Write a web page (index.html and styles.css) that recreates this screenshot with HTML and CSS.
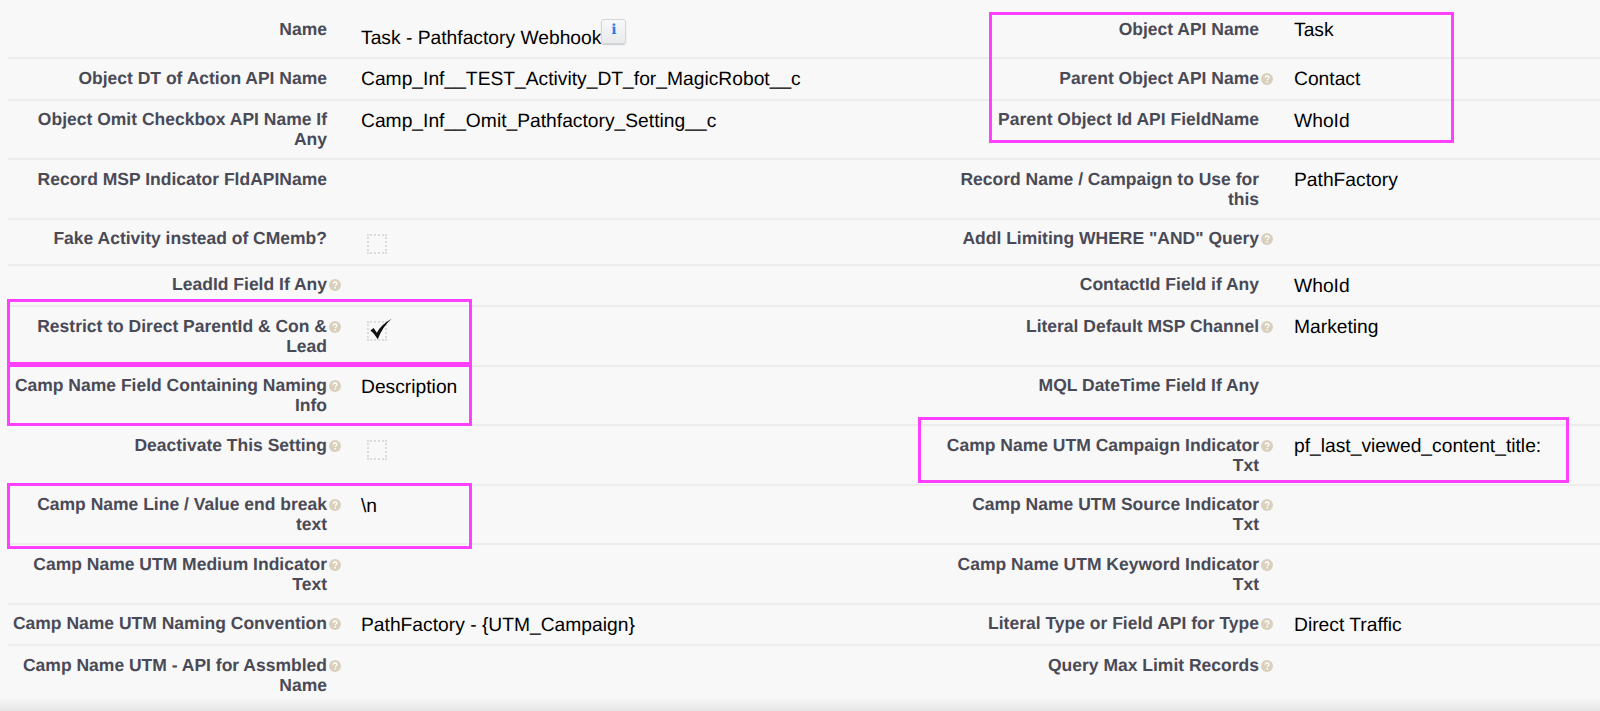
FILE: index.html
```html
<!DOCTYPE html>
<html lang="en">
<head>
<meta charset="utf-8">
<title>Task - Pathfactory Webhook</title>
<link rel="stylesheet" href="styles.css">
</head>
<body>
<svg class="defs" width="0" height="0" aria-hidden="true">
  <symbol id="help" viewBox="0 0 12 12">
    <circle cx="6" cy="6" r="6" fill="#d9d0bd"/>
    <path d="M4.2 4.7C4.3 3.6 5 3 6 3s1.9.6 1.9 1.6c0 .8-.5 1.1-1 1.5-.4.3-.6.5-.6 1" fill="none" stroke="#fff" stroke-width="1.3"/>
    <rect x="5.5" y="8" width="1.5" height="1.5" fill="#fff"/>
  </symbol>
</svg>
<main class="detail">
  <div class="row row-first">
    <div class="label">Name</div>
    <div class="value">Task - Pathfactory Webhook<span class="info">i</span></div>
    <div class="label">Object API Name</div>
    <div class="value">Task</div>
  </div>
  <div class="row">
    <div class="label">Object DT of Action API Name</div>
    <div class="value">Camp_Inf__TEST_Activity_DT_for_MagicRobot__c</div>
    <div class="label">Parent Object API Name<svg class="help"><use href="#help"/></svg></div>
    <div class="value">Contact</div>
  </div>
  <div class="row">
    <div class="label">Object Omit Checkbox API Name If<br>Any</div>
    <div class="value">Camp_Inf__Omit_Pathfactory_Setting__c</div>
    <div class="label">Parent Object Id API FieldName</div>
    <div class="value">WhoId</div>
  </div>
  <div class="row">
    <div class="label">Record MSP Indicator FldAPIName</div>
    <div class="value"></div>
    <div class="label">Record Name / Campaign to Use for<br>this</div>
    <div class="value">PathFactory</div>
  </div>
  <div class="row">
    <div class="label">Fake Activity instead of CMemb?</div>
    <div class="value"><span class="check"></span></div>
    <div class="label">Addl Limiting WHERE "AND" Query<svg class="help"><use href="#help"/></svg></div>
    <div class="value"></div>
  </div>
  <div class="row">
    <div class="label">LeadId Field If Any<svg class="help"><use href="#help"/></svg></div>
    <div class="value"></div>
    <div class="label">ContactId Field if Any</div>
    <div class="value">WhoId</div>
  </div>
  <div class="row">
    <div class="label">Restrict to Direct ParentId &amp; Con &amp;<svg class="help"><use href="#help"/></svg><br>Lead</div>
    <div class="value"><span class="check">
      <svg class="tick" viewBox="0 0 26 24"><path d="M1.5 13.5 5 11l3.5 5C12 10 17 5 24.5 1 18 7 13 14 9.5 23 7 19 4.5 16 1.5 13.5Z" fill="#111"/></svg>
    </span></div>
    <div class="label">Literal Default MSP Channel<svg class="help"><use href="#help"/></svg></div>
    <div class="value">Marketing</div>
  </div>
  <div class="row">
    <div class="label">Camp Name Field Containing Naming<svg class="help"><use href="#help"/></svg><br>Info</div>
    <div class="value">Description</div>
    <div class="label">MQL DateTime Field If Any</div>
    <div class="value"></div>
  </div>
  <div class="row">
    <div class="label">Deactivate This Setting<svg class="help"><use href="#help"/></svg></div>
    <div class="value"><span class="check"></span></div>
    <div class="label">Camp Name UTM Campaign Indicator<svg class="help"><use href="#help"/></svg><br>Txt</div>
    <div class="value">pf_last_viewed_content_title:</div>
  </div>
  <div class="row">
    <div class="label">Camp Name Line / Value end break<svg class="help"><use href="#help"/></svg><br>text</div>
    <div class="value">\n</div>
    <div class="label">Camp Name UTM Source Indicator<svg class="help"><use href="#help"/></svg><br>Txt</div>
    <div class="value"></div>
  </div>
  <div class="row">
    <div class="label">Camp Name UTM Medium Indicator<svg class="help"><use href="#help"/></svg><br>Text</div>
    <div class="value"></div>
    <div class="label">Camp Name UTM Keyword Indicator<svg class="help"><use href="#help"/></svg><br>Txt</div>
    <div class="value"></div>
  </div>
  <div class="row">
    <div class="label">Camp Name UTM Naming Convention<svg class="help"><use href="#help"/></svg></div>
    <div class="value">PathFactory - {UTM_Campaign}</div>
    <div class="label">Literal Type or Field API for Type<svg class="help"><use href="#help"/></svg></div>
    <div class="value">Direct Traffic</div>
  </div>
  <div class="row row-last">
    <div class="label">Camp Name UTM - API for Assmbled<svg class="help"><use href="#help"/></svg><br>Name</div>
    <div class="value"></div>
    <div class="label">Query Max Limit Records<svg class="help"><use href="#help"/></svg></div>
    <div class="value"></div>
  </div>
  <div class="mark mark-api"></div>
  <div class="mark mark-restrict"></div>
  <div class="mark mark-naming"></div>
  <div class="mark mark-break"></div>
  <div class="mark mark-utm"></div>
</main>
<div class="fade"></div>
</body>
</html>
```

FILE: styles.css
```css
html, body {
  margin: 0;
  height: 711px;
  overflow: hidden;
  background: #f8f8f8;
}
.defs {
  position: absolute;
}
.detail {
  position: relative;
  margin-left: 8px;
  padding-top: 10px;
  font-family: "Liberation Sans", Arial, sans-serif;
  text-rendering: geometricPrecision;
}
.row {
  display: grid;
  grid-template-columns: 343px 591px 342px 1fr;
  border-bottom: 2px solid #eceded;
}
.row-last {
  border-bottom: 0;
}
.label {
  padding: 8.5px 24px 9px 0;
  text-align: right;
  font-size: 17.5px;
  line-height: 20px;
  font-weight: 700;
  color: #4a4a56;
}
.row .label:nth-child(3) {
  padding-right: 25px;
}
.value {
  padding: 10px 0 8.5px 10px;
  font-size: 19.25px;
  line-height: 21px;
  color: #000;
}
.row-first .value:nth-child(2) {
  padding: 9px 0 8px 10px;
}
.info {
  display: inline-block;
  overflow: hidden;
  width: 25px;
  height: 25px;
  box-sizing: border-box;
  vertical-align: 0;
  border: 1px solid #d4d6d8;
  border-radius: 3px;
  background: linear-gradient(#f7f8f9, #e8eaec);
  box-shadow: 0 1px 1px #c8c8c8;
  text-align: center;
  font-family: "DejaVu Serif", serif;
  font-size: 14px;
  line-height: 21px;
  font-weight: 700;
  color: #2a7de1;
}
.help {
  display: inline-block;
  width: 12px;
  height: 12px;
  margin-left: 2px;
  margin-right: -14px;
  vertical-align: -1px;
}
.check {
  position: relative;
  display: block;
  width: 20px;
  height: 20px;
  box-sizing: border-box;
  margin: 4px 0 1.5px 6px;
  border: 2px dotted #dcdcdc;
}
.tick {
  position: absolute;
  left: 0;
  top: -6px;
  width: 24px;
  height: 24px;
}
.mark {
  position: absolute;
  box-sizing: border-box;
  border: 3px solid #ff40ff;
}
.mark-api { left: 981px; top: 12px; width: 465px; height: 131px; }
.mark-restrict { left: -1px; top: 299px; width: 465px; height: 66px; }
.mark-naming { left: -1px; top: 364px; width: 465px; height: 62px; }
.mark-break { left: -1px; top: 483px; width: 465px; height: 66px; }
.mark-utm { left: 910px; top: 417px; width: 651px; height: 66px; }
.fade {
  position: absolute;
  left: 0;
  right: 0;
  bottom: 0;
  height: 14px;
  background: linear-gradient(rgba(230,230,230,0), rgba(225,225,225,.8));
}
```
